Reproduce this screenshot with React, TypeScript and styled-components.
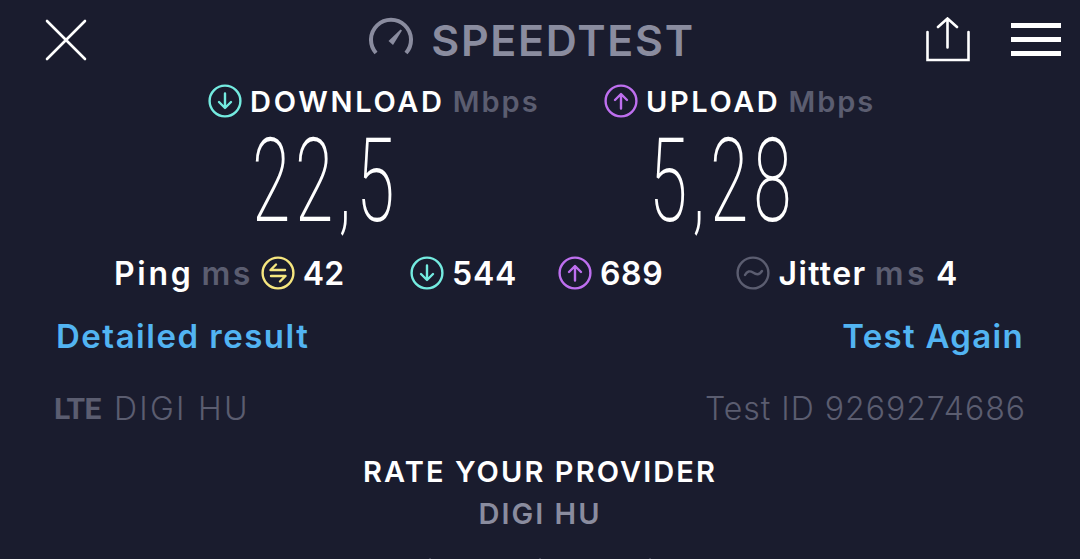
import React from 'react'
import styled, { createGlobalStyle } from 'styled-components'

const GlobalStyle = createGlobalStyle`
  html, body {
    margin: 0;
    padding: 0;
    background: #1a1c2e;
  }
  body {
    font-family: "Inter", "Liberation Sans", sans-serif;
    overflow: hidden;
  }
`

const Page = styled.div`
  width: 1080px;
  height: 559px;
  overflow: hidden;
  background: #1a1c2e;
  color: #fff;
  display: flex;
  flex-direction: column;
`

const TopBar = styled.div`
  height: 80px;
  flex-shrink: 0;
  padding: 0 19px 0 44px;
  display: flex;
  align-items: center;
  justify-content: space-between;
`

const IconButton = styled.div`
  display: flex;
  align-items: center;
`

const Brand = styled.div`
  display: flex;
  align-items: center;
  gap: 16px;
  margin-left: 50px;
  color: #8a8c9f;
  font-size: 43px;
  font-weight: 600;
  letter-spacing: 1.7px;
`

const TopRight = styled.div`
  display: flex;
  align-items: center;
  gap: 41px;
`

const SpeedRow = styled.div`
  display: flex;
  padding-left: 208px;
  flex-shrink: 0;
`

const SpeedCol = styled.div<{ $width: number }>`
  flex: 0 0 ${p => p.$width}px;
  display: flex;
  flex-direction: column;
  align-items: flex-start;
`

const SpeedLabel = styled.div`
  display: flex;
  align-items: center;
  gap: 8px;
  font-size: 29px;
  font-weight: 600;
  height: 42px;
`

const Word = styled.span<{ $ls?: number }>`
  letter-spacing: ${p => p.$ls ?? 0}px;
`

const Unit = styled(Word)`
  color: #5b5d70;
`

const BigValue = styled.div<{ $offset: number }>`
  font-family: "Roboto", sans-serif;
  font-weight: 200;
  font-size: 116px;
  line-height: 118px;
  height: 118px;
  letter-spacing: 8px;
  margin-left: ${p => p.$offset}px;
  transform: scaleX(0.6);
  transform-origin: left center;
`

const StatsRow = styled.div`
  height: 50px;
  margin-top: 8px;
  flex-shrink: 0;
  display: flex;
  align-items: center;
  padding-left: 114px;
  font-size: 32px;
  font-weight: 600;
`

const Stat = styled.div<{ $ml?: number }>`
  display: flex;
  align-items: center;
  gap: 8px;
  margin-left: ${p => p.$ml ?? 0}px;
`

const ActionRow = styled.div`
  flex-shrink: 0;
  display: flex;
  justify-content: space-between;
  padding: 0 56px;
  margin-top: 16px;
  font-size: 33px;
  font-weight: 600;
  color: #52b4f2;
  height: 44px;
  align-items: center;
`

const InfoRow = styled.div`
  flex-shrink: 0;
  display: flex;
  justify-content: space-between;
  align-items: center;
  padding: 0 54px;
  margin-top: 28px;
  height: 44px;
  color: #5b5d70;
  font-size: 32px;
  font-weight: 300;
`

const Carrier = styled.div`
  display: flex;
  align-items: center;
  gap: 13px;
`

const Lte = styled.span`
  font-family: "Roboto", sans-serif;
  font-weight: 700;
  font-size: 30px;
  letter-spacing: -0.5px;
`

const RateTitle = styled.div`
  flex-shrink: 0;
  margin-top: 21px;
  height: 42px;
  line-height: 42px;
  text-align: center;
  font-size: 29px;
  font-weight: 600;
  letter-spacing: 2.1px;
`

const RateProvider = styled.div`
  flex-shrink: 0;
  height: 41px;
  line-height: 41px;
  text-align: center;
  font-size: 29px;
  font-weight: 600;
  color: #8a8c9f;
  letter-spacing: 2px;
`

const Stars = styled.div`
  display: flex;
  justify-content: center;
  gap: 108px;
  margin-top: 24px;
`

const StarTip = styled.div`
  width: 2px;
  height: 2px;
  background: #3d3f52;
`

const Circle: React.FC<{ color: string; children: React.ReactNode }> = ({ color, children }) => (
  <svg width="34" height="34" viewBox="0 0 34 34" fill="none" stroke={color} strokeWidth="2.4" strokeLinecap="round" strokeLinejoin="round">
    <circle cx="17" cy="17" r="15.4" />
    {children}
  </svg>
)

const DownIcon = () => (
  <Circle color="#74ebe0">
    <path d="M17 9.500v14M11 18l6 6 6-6" />
  </Circle>
)

const UpIcon = () => (
  <Circle color="#be6fef">
    <path d="M17 24.500v-14M11 16l6-6 6 6" />
  </Circle>
)

const PingIcon = () => (
  <Circle color="#f6e67f">
    <path d="M24 14H9.500l5.500-5.500M10 20h14.500L19 25.500" />
  </Circle>
)

const JitterIcon = () => (
  <Circle color="#5b5d70">
    <path d="M9 19c2-4 5-4.500 8-2.500s6 3 9-1.500" />
  </Circle>
)

export default function App() {
  return (
    <Page>
      <GlobalStyle />
      <TopBar>
        <IconButton>
          <svg width="44" height="44" viewBox="0 0 44 44" stroke="#fff" strokeWidth="2.6" strokeLinecap="round">
            <path d="M3 3l38 38M41 3L3 41" />
          </svg>
        </IconButton>
        <Brand>
          <svg width="46" height="46" viewBox="0 0 46 46" fill="none" stroke="#8a8c9f" strokeWidth="4">
            <path d="M7 36A20 20 0 1 1 37 36" />
            <path d="M19.500 24L24 28 33 13.500 31.500 12.500z" fill="#8a8c9f" stroke="none" />
          </svg>
          SPEEDTEST
        </Brand>
        <TopRight>
          <svg width="44" height="46" viewBox="0 0 44 46" fill="none" stroke="#fff" strokeWidth="2.600" strokeLinecap="round">
            <path d="M21.500 1.500v29M12 10l9.500-8.500L31 10" />
            <path d="M1.500 15v28h41V15" />
          </svg>
          <svg width="50" height="34" viewBox="0 0 50 34" fill="#fff">
            <rect y="0" width="50" height="5" />
            <rect y="14" width="50" height="5" />
            <rect y="28" width="50" height="5" />
          </svg>
        </TopRight>
      </TopBar>
      <SpeedRow>
        <SpeedCol $width={396}>
          <SpeedLabel>
            <DownIcon />
            <Word $ls={2.7}>DOWNLOAD</Word>
            <Unit $ls={2}>Mbps</Unit>
          </SpeedLabel>
          <BigValue $offset={44}>22,5</BigValue>
        </SpeedCol>
        <SpeedCol $width={396}>
          <SpeedLabel>
            <UpIcon />
            <Word $ls={2.6}>UPLOAD</Word>
            <Unit $ls={2}>Mbps</Unit>
          </SpeedLabel>
          <BigValue $offset={45}>5,28</BigValue>
        </SpeedCol>
      </SpeedRow>
      <StatsRow>
        <Stat>
          <Word $ls={2.7}>Ping</Word>
          <Unit $ls={2.5}>ms</Unit>
          <PingIcon />
          <Word>42</Word>
        </Stat>
        <Stat $ml={66}>
          <DownIcon />
          <Word $ls={0.7}>544</Word>
        </Stat>
        <Stat $ml={41}>
          <UpIcon />
          <Word $ls={0.7}>689</Word>
        </Stat>
        <Stat $ml={73}>
          <JitterIcon />
          <Word $ls={1.4}>Jitter</Word>
          <Unit $ls={3.5}>ms</Unit>
          <Word>4</Word>
        </Stat>
      </StatsRow>
      <ActionRow>
        <Word $ls={1.5}>Detailed result</Word>
        <Word $ls={1.3}>Test Again</Word>
      </ActionRow>
      <InfoRow>
        <Carrier>
          <Lte>LTE</Lte>
          <Word $ls={2.3}>DIGI HU</Word>
        </Carrier>
        <Word $ls={1}>Test ID 9269274686</Word>
      </InfoRow>
      <RateTitle>RATE YOUR PROVIDER</RateTitle>
      <RateProvider>DIGI HU</RateProvider>
      <Stars>
        <StarTip />
        <StarTip />
        <StarTip />
      </Stars>
    </Page>
  )
}
